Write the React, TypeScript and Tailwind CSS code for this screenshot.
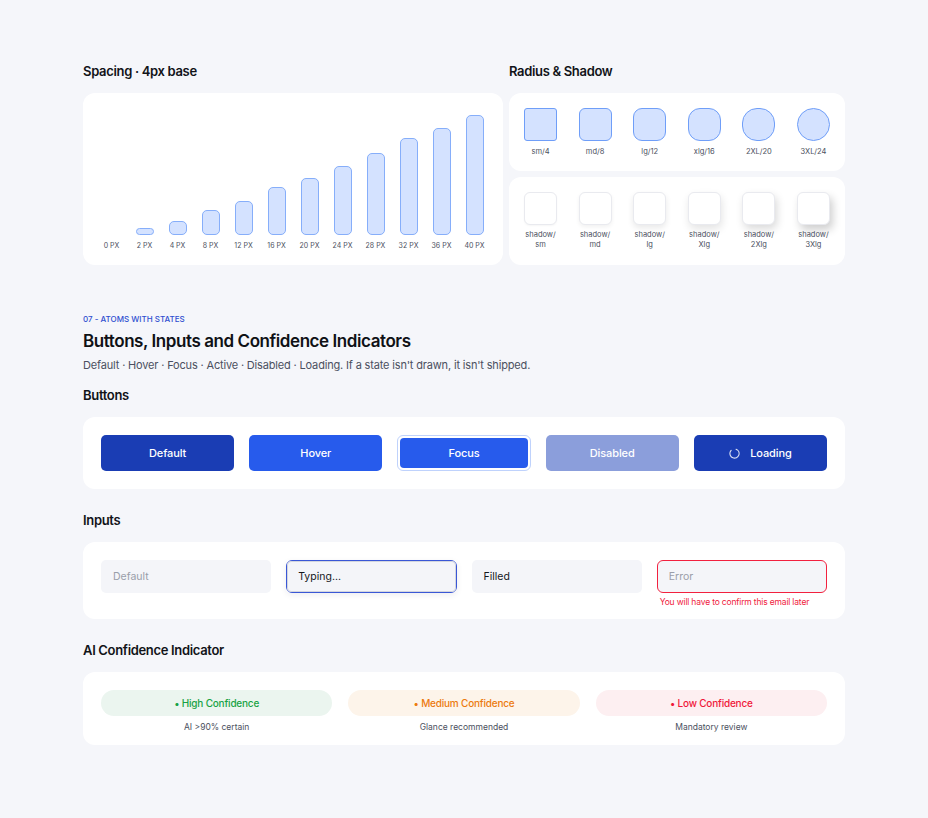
const font = { fontFamily: 'Inter, "Noto Sans", sans-serif' }

// spacing token bars: label + drawn height in px
const spacingBars = [
  { label: '0 PX', h: 0 },
  { label: '2 PX', h: 7 },
  { label: '4 PX', h: 14 },
  { label: '8 PX', h: 25 },
  { label: '12 PX', h: 34 },
  { label: '16 PX', h: 48 },
  { label: '20 PX', h: 57 },
  { label: '24 PX', h: 69 },
  { label: '28 PX', h: 82 },
  { label: '32 PX', h: 97 },
  { label: '36 PX', h: 107 },
  { label: '40 PX', h: 120 },
]

const radii = [
  { label: 'sm/4', cls: 'rounded-[3px]' },
  { label: 'md/8', cls: 'rounded-[6px]' },
  { label: 'lg/12', cls: 'rounded-[9px]' },
  { label: 'xlg/16', cls: 'rounded-[12px]' },
  { label: '2XL/20', cls: 'rounded-[15px]' },
  { label: '3XL/24', cls: 'rounded-full' },
]

const shadows = [
  { top: 'shadow/', bottom: 'sm', cls: 'shadow-[0_1px_2px_rgba(0,0,0,0.04)]' },
  { top: 'shadow/', bottom: 'md', cls: 'shadow-[0_2px_4px_rgba(0,0,0,0.06)]' },
  { top: 'shadow/', bottom: 'lg', cls: 'shadow-[0_3px_6px_rgba(0,0,0,0.09)]' },
  { top: 'shadow/', bottom: 'Xlg', cls: 'shadow-[1px_4px_8px_rgba(0,0,0,0.11)]' },
  { top: 'shadow/', bottom: '2Xlg', cls: 'shadow-[2px_4px_8px_rgba(0,0,0,0.15)]' },
  { top: 'shadow/', bottom: '3Xlg', cls: 'shadow-[3px_5px_8px_rgba(0,0,0,0.19)]' },
]

const confidence = [
  { label: '• High Confidence', caption: 'AI >90% certain', cls: 'bg-[#ebf5ef] text-[#18a345]' },
  { label: '• Medium Confidence', caption: 'Glance recommended', cls: 'bg-[#fdf4ea] text-[#ec7a0e]' },
  { label: '• Low Confidence', caption: 'Mandatory review', cls: 'bg-[#fdeff1] text-[#f0193a]' },
]

function SectionTitle({ children, className = '' }: { children: React.ReactNode; className?: string }) {
  return (
    <h3 className={`h-4 text-[13px] leading-4 font-semibold tracking-[-0.025em] text-[#111318] ${className}`}>
      {children}
    </h3>
  )
}

function Spinner() {
  return (
    <svg width="11" height="11" viewBox="0 0 12 12" fill="none">
      <circle cx="6" cy="6" r="5" stroke="white" strokeOpacity="0.85" strokeWidth="1.2" strokeDasharray="25 6.4" strokeLinecap="round" transform="rotate(-70 6 6)" />
    </svg>
  )
}

const btn = 'h-9 rounded-[5px] text-[11px] font-medium tracking-[-0.01em] text-white'

export default function App() {
  return (
    <div className="min-h-screen bg-[#f5f6fa] px-[83px] pt-[63px] pb-10 text-[#111318]" style={font}>
      <div className="grid grid-cols-[420px_336px] gap-[6px]">
        <div>
          <SectionTitle className="mb-[14px]">Spacing · 4px base</SectionTitle>
          <div className="flex h-[172px] items-end rounded-xl bg-white px-3 pb-[15px]">
            {spacingBars.map((bar) => (
              <div key={bar.label} className="flex w-[33px] flex-col items-center">
                {bar.h > 0 && (
                  <div
                    className="w-[18px] rounded-[5px] border border-[#86aefa] bg-[#d4e2ff]"
                    style={{ height: bar.h }}
                  />
                )}
                <span className="mt-[6px] text-[7px] leading-[9px] whitespace-nowrap text-[#4b5060]">{bar.label}</span>
              </div>
            ))}
          </div>
        </div>

        <div>
          <SectionTitle className="mb-[14px]">Radius &amp; Shadow</SectionTitle>
          <div className="flex h-[78px] items-start justify-between rounded-xl bg-white px-[15px] pt-[15px]">
            {radii.map((r) => (
              <div key={r.label} className="flex w-[33px] flex-col items-center">
                <div className={`h-[33px] w-[33px] border border-[#6f9ef8] bg-[#d4e2ff] ${r.cls}`} />
                <span className="mt-[6px] text-[7.5px] leading-[9px] whitespace-nowrap text-[#4b5060]">{r.label}</span>
              </div>
            ))}
          </div>
          <div className="mt-[6px] flex h-[88px] items-start justify-between rounded-xl bg-white px-[15px] pt-[15px]">
            {shadows.map((s) => (
              <div key={s.bottom} className="flex w-[33px] flex-col items-center">
                <div className={`h-[33px] w-[33px] rounded-[6px] border border-[#e9eaef] bg-white ${s.cls}`} />
                <span className="mt-[5px] text-center text-[7.5px] leading-[10px] whitespace-nowrap text-[#4b5060]">
                  {s.top}
                  <br />
                  {s.bottom}
                </span>
              </div>
            ))}
          </div>
        </div>
      </div>

      <p className="mt-[49px] h-[10px] text-[8px] leading-[10px] font-medium text-[#2f4fd0]">07 - ATOMS WITH STATES</p>
      <h2 className="mt-[6px] h-[22px] text-[17px] leading-[22px] font-semibold tracking-[-0.025em] text-[#0f1115]">
        Buttons, Inputs and Confidence Indicators
      </h2>
      <p className="mt-[5px] h-4 text-[11px] leading-4 tracking-[-0.015em] text-[#4b5060]">
        Default · Hover · Focus · Active · Disabled · Loading. If a state isn't drawn, it isn't shipped.
      </p>

      <SectionTitle className="mt-[14px] mb-[14px]">Buttons</SectionTitle>
      <div className="grid grid-cols-5 gap-[15px] rounded-xl bg-white px-[18px] py-[18px]">
        <button className={`${btn} bg-[#1a3db4]`}>Default</button>
        <button className={`${btn} bg-[#275bec]`}>Hover</button>
        <div className="h-9 rounded-[6px] border border-[#bfd2fc] p-[2px]">
          <button className="h-full w-full rounded-[4px] bg-[#275bec] text-[11px] font-medium tracking-[-0.01em] text-white">
            Focus
          </button>
        </div>
        <button className={`${btn} bg-[#8b9edb]`}>Disabled</button>
        <button className={`${btn} flex items-center justify-center gap-[10px] bg-[#1a3db4]`}>
          <Spinner />
          Loading
        </button>
      </div>

      <SectionTitle className="mt-[23px] mb-[14px]">Inputs</SectionTitle>
      <div className="grid grid-cols-4 items-start gap-[15px] rounded-xl bg-white px-[18px] pt-[18px] pb-[12px]">
        <div className="flex h-[33px] items-center rounded-[5px] bg-[#f4f5f9] px-3 text-[10.5px] text-[#9a9ea9]">Default</div>
        <div className="h-[33px] rounded-[6px] border-[1.5px] border-[#3a57d6] shadow-[0_2px_6px_rgba(20,30,60,0.08)]">
          <div className="flex h-full items-center rounded-[4px] border border-[#d3d6de] bg-[#f4f5f9] px-[10px] text-[10.5px] text-[#15171c]">
            Typing...
          </div>
        </div>
        <div className="flex h-[33px] items-center rounded-[5px] bg-[#f4f5f9] px-3 text-[10.5px] text-[#15171c]">Filled</div>
        <div className="min-w-0">
          <div className="flex h-[33px] items-center rounded-[6px] border-[1.5px] border-[#f2213f] bg-[#f4f5f9] px-[11px] text-[10.5px] text-[#9a9ea9]">
            Error
          </div>
          <p className="mt-[4px] px-[3px] text-[8.5px] leading-[10px] tracking-[-0.02em] whitespace-nowrap text-[#f0213d]">
            You will have to confirm this email later
          </p>
        </div>
      </div>

      <SectionTitle className="mt-[23px] mb-[14px]">AI Confidence Indicator</SectionTitle>
      <div className="grid grid-cols-3 gap-4 rounded-xl bg-white px-[18px] pt-[18px] pb-[13px]">
        {confidence.map((c) => (
          <div key={c.label} className="flex flex-col items-center">
            <div
              className={`flex h-[26px] w-full items-center justify-center rounded-full text-[10px] font-medium tracking-[-0.02em] ${c.cls}`}
            >
              {c.label}
            </div>
            <p className="mt-[6px] text-[8.5px] leading-[10px] text-[#4b5060]">{c.caption}</p>
          </div>
        ))}
      </div>
    </div>
  )
}
